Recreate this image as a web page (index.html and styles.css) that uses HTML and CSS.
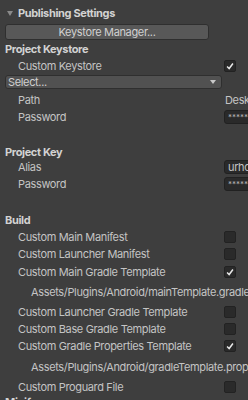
FILE: index.html
```html
<!DOCTYPE html>
<html lang="en">
  <head>
    <meta charset="UTF-8" />
    <meta name="viewport" content="width=device-width, initial-scale=1.0" />
    <title>Publishing Settings</title>
    <link rel="stylesheet" href="styles.css">
  </head>
  <body>
    <div class="panel">
      <div class="foldout"><span class="arrow"></span>Publishing Settings</div>
      <button class="btn">Keystore Manager...</button>

      <div class="section first">Project Keystore</div>
      <div class="row">
        <span class="label">Custom Keystore</span>
        <span class="check on"><svg viewBox="0 0 12 12"><path d="M2.5 6.5 L5 9 L9.5 3" /></svg></span>
      </div>
      <div class="dropdown">Select...<span class="caret"></span></div>
      <div class="row field-row">
        <span class="label">Path</span>
        <span class="value">Desktop/user.keystore</span>
      </div>
      <div class="row field-row">
        <span class="label">Password</span>
        <span class="field pass">********</span>
      </div>

      <div class="section gap short">Project Key</div>
      <div class="row field-row">
        <span class="label">Alias</span>
        <span class="field">urhoalias</span>
      </div>
      <div class="row field-row">
        <span class="label">Password</span>
        <span class="field pass">********</span>
      </div>

      <div class="section gap">Build</div>
      <div class="row">
        <span class="label">Custom Main Manifest</span>
        <span class="check"></span>
      </div>
      <div class="row">
        <span class="label">Custom Launcher Manifest</span>
        <span class="check"></span>
      </div>
      <div class="row">
        <span class="label">Custom Main Gradle Template</span>
        <span class="check on"><svg viewBox="0 0 12 12"><path d="M2.5 6.5 L5 9 L9.5 3" /></svg></span>
      </div>
      <div class="path">Assets/Plugins/Android/mainTemplate.gradle</div>
      <div class="row">
        <span class="label">Custom Launcher Gradle Template</span>
        <span class="check"></span>
      </div>
      <div class="row">
        <span class="label">Custom Base Gradle Template</span>
        <span class="check"></span>
      </div>
      <div class="row">
        <span class="label">Custom Gradle Properties Template</span>
        <span class="check on"><svg viewBox="0 0 12 12"><path d="M2.5 6.5 L5 9 L9.5 3" /></svg></span>
      </div>
      <div class="path">Assets/Plugins/Android/gradleTemplate.properties</div>
      <div class="row">
        <span class="label">Custom Proguard File</span>
        <span class="check"></span>
      </div>
      <div class="section last">Minify</div>
    </div>
  </body>
</html>
```

FILE: styles.css
```css
body {
  margin: 0;
  width: 248px;
  height: 400px;
  overflow: hidden;
  background: #3e3e3e;
  font-family: Inter, "Noto Sans", sans-serif;
  font-size: 11px;
  letter-spacing: -0.35px;
  color: #c4c4c4;
}
.panel {
  display: flex;
  flex-direction: column;
  padding-top: 4px;
  white-space: nowrap;
}
.foldout {
  display: flex;
  align-items: center;
  height: 18px;
  padding-left: 7px;
  font-weight: bold;
  color: #d2d2d2;
}
.arrow {
  width: 0;
  height: 0;
  border-left: 3.5px solid transparent;
  border-right: 3.5px solid transparent;
  border-top: 5px solid #8a8a8a;
  margin-right: 5px;
}
.btn {
  box-sizing: border-box;
  margin: 2px 0 0 5px;
  width: 204px;
  height: 16px;
  padding: 0;
  background: #585858;
  border: 1px solid #2f2f2f;
  border-radius: 3px;
  color: #d0d0d0;
  font-family: inherit;
  font-size: 11px;
  letter-spacing: -0.35px;
}
.section {
  display: flex;
  align-items: center;
  height: 16px;
  padding-left: 5px;
  font-weight: bold;
  color: #d2d2d2;
}
.section.first {
  margin-top: 1px;
}
.section.gap {
  margin-top: 19.5px;
}
.section.short {
  height: 14px;
}
.section.last {
  height: 14px;
}
.row {
  display: flex;
  align-items: center;
  height: 17.3px;
  padding-left: 18px;
}
.field-row {
  height: 17px;
}
.label {
  flex: 0 0 206px;
}
.check {
  box-sizing: border-box;
  width: 12px;
  height: 12px;
  background: #2a2a2a;
  border: 1px solid #222;
  border-radius: 2px;
  display: flex;
  align-items: center;
  justify-content: center;
}
.check svg {
  width: 10px;
  height: 10px;
  fill: none;
  stroke: #e8e8e8;
  stroke-width: 1.8;
}
.dropdown {
  display: flex;
  align-items: center;
  justify-content: space-between;
  margin: 1px 0 2px 5px;
  width: 208px;
  height: 12px;
  padding: 0 5px 0 2px;
  background: #515151;
  border: 1px solid #2f2f2f;
  border-radius: 3px;
  color: #d0d0d0;
}
.caret {
  width: 0;
  height: 0;
  border-left: 3px solid transparent;
  border-right: 3px solid transparent;
  border-top: 4px solid #c8c8c8;
}
.value {
  padding-left: 1px;
}
.field {
  height: 12px;
  line-height: 12px;
  padding: 0 3px;
  background: #2a2a2a;
  border: 1px solid #212121;
  border-radius: 3px;
}
.field.pass {
  font-size: 8px;
  letter-spacing: 0;
  color: #b0b0b0;
}
.path {
  display: flex;
  align-items: center;
  height: 23px;
  padding-left: 31px;
}
```
